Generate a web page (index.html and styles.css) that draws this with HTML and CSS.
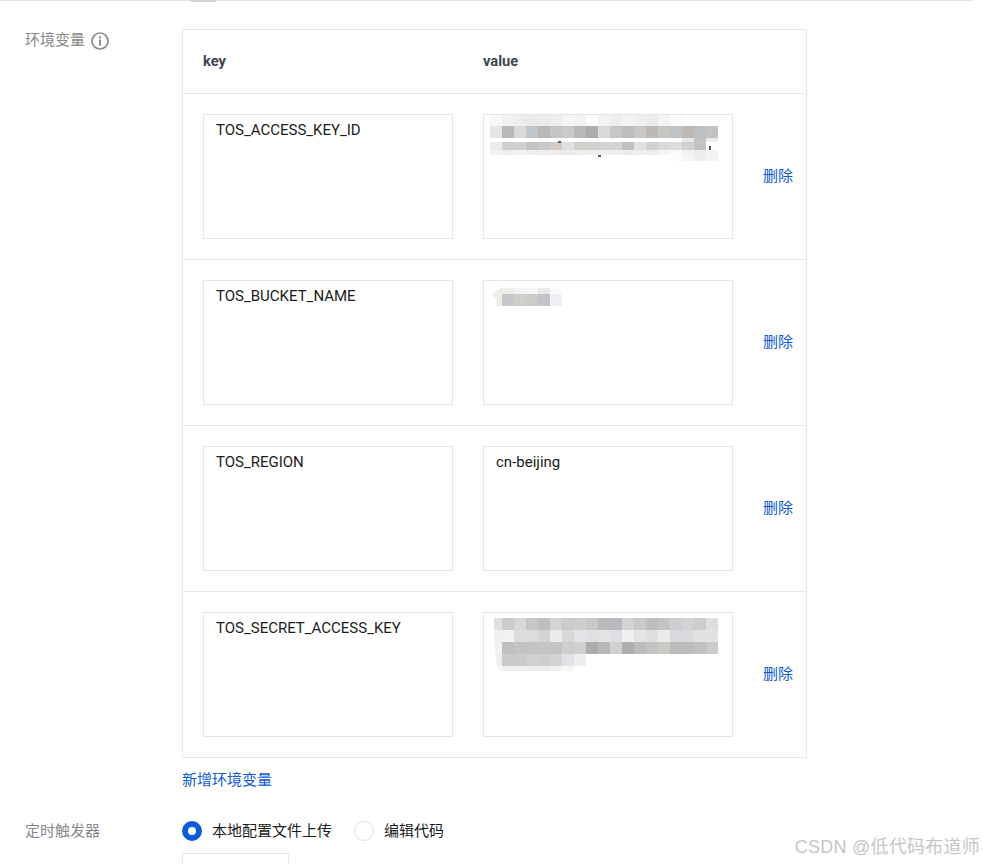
FILE: index.html
```html
<!DOCTYPE html>
<html lang="zh">
<head>
<meta charset="utf-8">
<title>环境变量</title>
<link rel="stylesheet" href="styles.css">
</head>
<body>
<div class="page">
  <div class="top-rule"><span class="top-blob"></span></div>
  <div class="form-row env-row">
    <div class="label env-label">环境变量
      <svg class="info" width="18" height="18" viewBox="0 0 18 18" fill="none"><circle cx="9" cy="9" r="8" stroke="#8c8c8c" stroke-width="1.7"/><rect x="8" y="7.6" width="2" height="6" fill="#8c8c8c"/><rect x="8" y="4.4" width="2" height="2" fill="#8c8c8c"/></svg>
    </div>
    <div class="control">
      <div class="env-table">
        <div class="env-head"><div class="col">key</div><div class="col">value</div></div>
        <div class="env-item">
          <textarea class="cell" readonly>TOS_ACCESS_KEY_ID</textarea>
          <div class="value-wrap">
            <textarea class="cell" readonly></textarea>
            <div class="mosaic" id="m1"><span class="speck s1"></span><span class="speck s2"></span><span class="speck s3"></span></div>
          </div>
          <a class="link del">删除</a>
        </div>
        <div class="env-item">
          <textarea class="cell" readonly>TOS_BUCKET_NAME</textarea>
          <div class="value-wrap">
            <textarea class="cell" readonly></textarea>
            <div class="mosaic" id="m2"><span class="arrow"></span></div>
          </div>
          <a class="link del">删除</a>
        </div>
        <div class="env-item">
          <textarea class="cell" readonly>TOS_REGION</textarea>
          <div class="value-wrap"><textarea class="cell" readonly>cn-beijing</textarea></div>
          <a class="link del">删除</a>
        </div>
        <div class="env-item">
          <textarea class="cell" readonly>TOS_SECRET_ACCESS_KEY</textarea>
          <div class="value-wrap">
            <textarea class="cell" readonly></textarea>
            <div class="mosaic clipped" id="m3"></div>
          </div>
          <a class="link del">删除</a>
        </div>
      </div>
      <a class="link add">新增环境变量</a>
    </div>
  </div>
  <div class="form-row timer-row">
    <div class="label">定时触发器</div>
    <div class="control">
      <div class="radios">
        <label class="radio-item"><span class="radio on"></span>本地配置文件上传</label>
        <label class="radio-item"><span class="radio"></span>编辑代码</label>
      </div>
      <div class="stub"></div>
    </div>
  </div>
  <div class="watermark">CSDN @低代码布道师</div>
</div>
<script src="mosaic.js"></script>
</body>
</html>
```
FILE: styles.css
```css
html, body { margin: 0; padding: 0; background: #fff; height: 864px; overflow: hidden; }
body { font-family: Roboto, "Noto Sans CJK SC", sans-serif; font-size: 15px; color: #1d2129; }
.page { position: relative; height: 864px; overflow: hidden; }
.top-rule { position: relative; width: 973px; height: 1px; background: #e4e5e7; }
.top-blob { position: absolute; left: 190px; top: 0; width: 27px; height: 2px; background: #d2d4d2; border-radius: 0 0 8px 8px; }
.form-row { display: flex; }
.env-row { padding-top: 28px; }
.label { width: 157px; margin-left: 25px; color: #86888c; font-size: 15px; line-height: 20px; flex: none; }
.env-label { display: flex; align-items: flex-start; gap: 6px; padding-top: 1px; height: 20px; }
.info { flex: none; margin-top: 2px; }
.control { flex: none; width: 625px; }
.env-table { border: 1px solid #e6e8f0; width: 625px; box-sizing: border-box; }
.env-head { display: flex; height: 63px; align-items: center; padding-left: 20px; padding-bottom: 1px; font-weight: 700; font-size: 14.7px; color: #42464e; box-sizing: border-box; }
.env-head .col { width: 280px; }
.env-item { display: flex; align-items: center; gap: 30px; height: 166px; padding: 0 20px; box-sizing: border-box; border-top: 1px solid #e6e8f0; }
.cell { display: block; flex: none; width: 250px; height: 125px; box-sizing: border-box; border: 1px solid #e2e5f0; padding: 5px 12px; margin: 0; resize: none; outline: none; font-family: Roboto, sans-serif; font-size: 15px; line-height: 20px; color: #1a1c20; background: #fff; overflow: hidden; }
.value-wrap { position: relative; width: 250px; height: 125px; flex: none; }
.link { color: #0c5bd8; text-decoration: none; font-size: 15px; line-height: 20px; }
.del { flex: none; margin-bottom: 2px; }
.add { display: block; margin-top: 12px; }
.mosaic { position: absolute; left: 7px; top: 1px; width: 240px; height: 60px; }
.mosaic.clipped { clip-path: polygon(4px 0, 100% 0, 100% 100%, 8px 100%, 4px 50%); }
.mrow { position: absolute; display: flex; }
.mrow i { display: block; width: 12px; flex: none; }
.arrow { position: absolute; left: 1px; top: 6px; width: 11px; height: 19px; background: #f0ede8; clip-path: polygon(100% 0, 0 40%, 50% 60%, 50% 100%, 100% 100%); }
.speck { position: absolute; z-index: 1; width: 3px; height: 2px; background: #4a5a7a; }
.s1 { left: 68px; top: 26px; }
.s2 { left: 108px; top: 40px; }
.s3 { left: 219px; top: 31px; width: 2px; height: 4px; }
.timer-row { margin-top: 31px; }
.radios { display: flex; align-items: center; gap: 22px; height: 20px; }
.radio-item { display: flex; align-items: center; gap: 10px; font-size: 15px; line-height: 20px; color: #1a1c20; }
.radio { width: 20px; height: 20px; box-sizing: border-box; border: 1px solid #dde1ec; border-radius: 50%; background: #fff; flex: none; }
.radio.on { border: 6px solid #0c5bd8; }
.stub { width: 107px; height: 40px; box-sizing: border-box; border: 1px solid #e6e8f0; margin-top: 12px; }
.watermark { position: absolute; right: 3px; top: 835px; font-family: "Liberation Sans", "Noto Sans CJK SC", sans-serif; font-size: 18px; line-height: 24px; letter-spacing: 0.25px; color: #c6c6c6; white-space: nowrap; }
```
FILE: mosaic.js
```js
// Redaction mosaics: each row = [y offset, height, x offset in px, colours...]
var data = {
  m1: [
    [0, 11, 0, 'f7f7f6','f1f1f1','eeeeee','e9eaec','ebebea','eeeeed','f6f6f6','f3f3f3','ffffff','f3f3f3','eeeeee','f4f4f4','f0efee','ebebeb','f4f4f4','fafafa','ffffff','ffffff','ffffff'],
    [11, 12, 0, 'e6e5e3','b9b9b9','dcdad7','c0c4cb','b9b8b5','c5c5c6','cacaca','bcb8b6','acadae','d9d9d9','c5c6c8','bebebe','c8c7c5','bdb9b5','c6c6c3','bfc2c7','bcb9b5','bcbfc3','c2c2c2'],
    [23, 4, 0, 'ffffff','ffffff','ffffff','ffffff','fbfbfb','ffffff','ffffff','ffffff','ffffff','ffffff','ffffff','ffffff','ffffff','ffffff','ffffff','fbfbfb','e8e8e8','c0c2c5','ebebeb'],
    [27, 8, 0, 'ebebeb','cfcfcf','cfd0d2','c5c3c1','c7c8ca','d3ccc6','dde2e5','d3d0cc','d0d2d2','d2d2d2','d2d4d5','c5c0bd','dfe2e1','d0d2d3','dadada','dcdcdc','d1d1d1','c0c2c5','ffffff'],
    [35, 5, 0, 'f3f3f3','ededed','f3f3f3','eeeeee','ededed','ececec','ebebeb','ededed','efefef','f0f0f0','efefef','ebebeb','eeeeee','ededed','f5f5f5','fafafa','f1f1f1','ededed','f3f3f3'],
    [40, 6, 0, 'ffffff','ffffff','ffffff','ffffff','ffffff','ffffff','ffffff','ffffff','ffffff','ffffff','ffffff','ffffff','ffffff','ffffff','ffffff','fbfbfb','f6f6f6','eeeeee','f2f2f2']
  ],
  m2: [
    [7, 6, 12, 'eeeeeb','f3f3f3','f6f6f6','e9e9e8','fafafa'],
    [13, 12, 12, 'c6c8ca','d0ceca','cbcbc8','c3c4c8','eef0f2']
  ],
  m3: [
    [5, 12, 0, 'e0e0e0','cdcccb','d6d8d9','c6c8c8','bfbebd','d1d3d6','cccbcb','cfcecd','c7c8c8','bdb8b9','b7bac0','d3d3d2','c8c9ca','bcbebe','c4c2c2','cdd0d3','d3d3d3','cbcdce','dededf'],
    [17, 12, 0, 'f0f0ef','f2f2f1','dedcdb','dcdcdc','d3d3d3','eaecea','dad8d6','e2e4e7','e1e1e2','e5e3e1','dddfe2','f0f0f0','e5e4e2','dde0e0','ecebe8','d7d9dc','dadada','e0e2e4','e2e2e3'],
    [29, 12, 0, 'f2f2f2','bdbfc1','c5c3c1','c4c4c4','c3c5c7','c6c4c2','cccfd0','cfcfcf','adacaa','b9b9b9','d2d1cf','adaeb0','bbbcbc','c5c3c1','cbc9c3','bcbcbc','bcbcbc','c0c0c0','c9cbcd'],
    [41, 12, 0, 'eeeeee','c9cbca','cbcac8','cfd1d5','d0cecc','d3d3d3','e2e3e6','eeeeee'],
    [53, 5, 0, 'f6f6f6','f0f0f0','f0f0f0','eeeeee','ededed','f1f1f1','f6f6f6']
  ]
};
Object.keys(data).forEach(function (id) {
  var box = document.getElementById(id);
  data[id].forEach(function (row) {
    var r = document.createElement('div');
    r.className = 'mrow';
    r.style.top = row[0] + 'px';
    r.style.left = row[2] + 'px';
    row.slice(3).forEach(function (c) {
      var i = document.createElement('i');
      i.style.height = row[1] + 'px';
      i.style.background = '#' + c;
      r.appendChild(i);
    });
    box.appendChild(r);
  });
});
```
